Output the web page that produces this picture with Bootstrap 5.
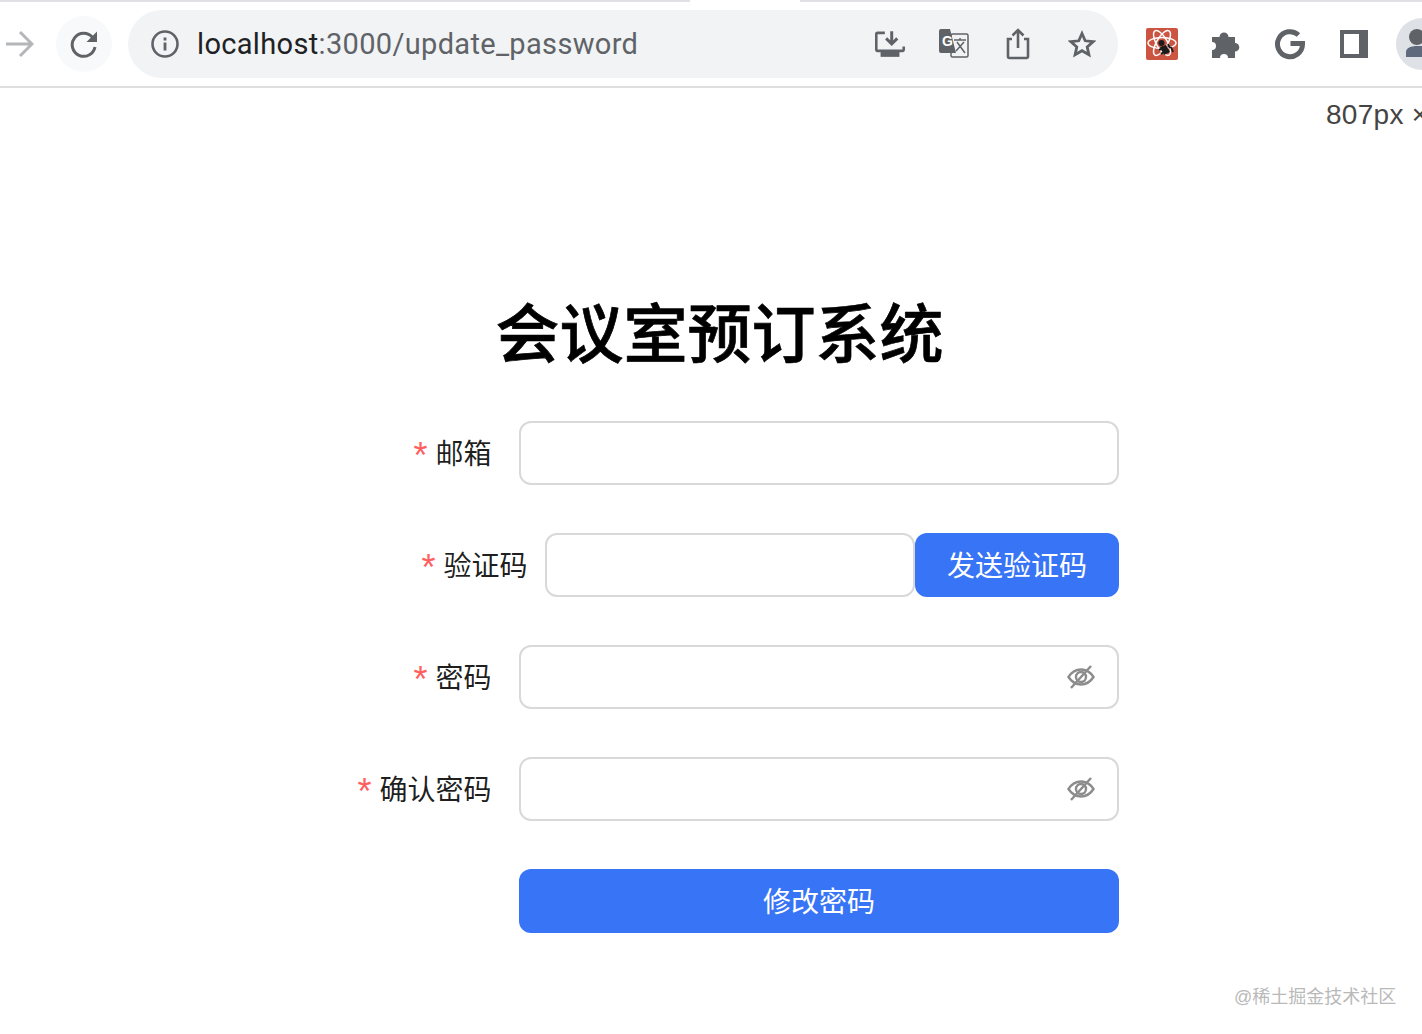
<!DOCTYPE html>
<html lang="zh-CN">
<head>
    <meta charset="UTF-8">
    <meta name="viewport" content="width=device-width, initial-scale=1.0">
    <title>会议室预订系统</title>
    <link href="https://cdn.jsdelivr.net/npm/bootstrap@5.3.3/dist/css/bootstrap.min.css" rel="stylesheet" />
    <style>
        html, body { height: 100%; }
        body {
            font-family: "Liberation Sans", "Noto Sans CJK SC", sans-serif;
            background: #fff;
            overflow: hidden;
            position: relative;
        }

        /* browser chrome */
        .tab-strip {
            height: 2px;
            background: linear-gradient(to right, #dfe1e5 690px, #fff 690px, #fff 800px, #dfe1e5 800px);
        }
        .tool-bar {
            width: 1460px;
            height: 86px;
            padding: 8px 0;
            border-bottom: 2px solid #dedfe1;
        }
        .tool-bar > * { flex-shrink: 0; }
        .back-arrow { width: 28px; margin-left: 6px; margin-right: 22px; }
        .reload-btn { width: 56px; height: 56px; border-radius: 50%; background: #f8f9fa; margin-right: 16px; }
        .omni-box { width: 990px; height: 68px; border-radius: 34px; background: #f1f3f4; padding-left: 22px; }
        .omni-url {
            font-family: Roboto, "Liberation Sans", sans-serif;
            font-size: 29px;
            color: #5f6368;
            margin-left: 17px;
            padding-top: 2px;
            letter-spacing: .33px;
        }
        .omni-url b { font-weight: 400; color: #202124; }
        .omni-icons { margin-left: auto; margin-right: 22px; gap: 31px; }
        .star-icon { margin-left: 1px; }
        .ext-icons { margin-left: 28px; gap: 32px; }
        .avatar-btn {
            width: 52px; height: 52px; border-radius: 50%; background: #dee1e6;
            flex-shrink: 0; margin-left: -6px; overflow: hidden;
        }
        .size-tip { position: absolute; left: 1326px; top: 96px; font-size: 28px; line-height: 38px; color: #444; white-space: nowrap; letter-spacing: .3px; }
        .water-mark { position: absolute; left: 1234px; top: 985px; font-size: 18px; line-height: 24px; color: #b9b9b9; white-space: nowrap; }

        /* form */
        .page-main { padding-left: 357px; width: 1119px; }
        .page-title {
            font-family: "Noto Sans CJK SC", sans-serif;
            font-size: 64px;
            line-height: 90px;
            font-weight: 500;
            -webkit-text-stroke: .7px #000;
            color: #000;
            text-align: center;
            margin: 196px 37px 47px 0;
        }
        .form-stack { gap: 48px; }
        .field-row { height: 64px; }
        .field-label {
            width: 134.5px;
            margin-right: 27.5px;
            padding-bottom: 2px;
            font-family: "Noto Sans CJK SC", sans-serif;
            font-size: 28px;
            color: rgba(0, 0, 0, .88);
            text-align: right;
            white-space: nowrap;
            flex-shrink: 0;
        }
        .field-label.wide { width: 170.5px; margin-right: 17.5px; }
        .req-star { color: #ff5f5f; margin-right: 8px; font-family: "Liberation Sans", sans-serif; font-size: 36px; line-height: 1; vertical-align: -4px; }
        .form-control.field-input {
            height: 64px;
            border: 2px solid #d9d9d9;
            border-radius: 12px;
            box-shadow: none;
        }
        .field-wrap { width: 600px; }
        .field-wrap.short { width: 370px; }
        .eye-off { position: absolute; right: 24px; top: 18px; }
        .btn.blue-btn {
            height: 64px;
            background: #3874f6;
            border: 0;
            border-radius: 12px;
            font-family: "Noto Sans CJK SC", sans-serif;
            font-size: 28px;
            color: #fff;
            padding: 0 0 2px;
        }
        .send-btn { width: 204px; flex-shrink: 0; }
        .submit-btn { width: 600px; margin-left: 162px; }
    </style>
</head>

<body>
    <div class="tab-strip"></div>
    <div class="tool-bar d-flex align-items-center">
        <svg class="back-arrow" width="28" height="28" viewBox="0 0 28 28" fill="none" stroke="#b4b6b8" stroke-width="3">
            <path d="M0 14H26M14 2L26 14L14 26" />
        </svg>
        <div class="reload-btn d-flex align-items-center justify-content-center">
            <svg width="28" height="28" viewBox="0 0 28 28">
                <path d="M22.6 7.5A11.5 11.5 0 1 0 25 17" fill="none" stroke="#5f6368" stroke-width="3" />
                <path d="M27 1.5V12H16.5Z" fill="#5f6368" />
            </svg>
        </div>
        <div class="omni-box d-flex align-items-center">
            <svg width="30" height="30" viewBox="0 0 30 30">
                <circle cx="15" cy="15" r="12.5" fill="none" stroke="#5f6368" stroke-width="2.6" />
                <rect x="13.6" y="13.5" width="2.8" height="8" fill="#5f6368" />
                <rect x="13.6" y="8.5" width="2.8" height="3" fill="#5f6368" />
            </svg>
            <span class="omni-url"><b>localhost</b>:3000/update_password</span>
            <div class="omni-icons d-flex align-items-center">
                <!-- install -->
                <svg width="36" height="28" viewBox="-3 0 42 32">
                    <path d="M12 3H3.5A1.5 1.5 0 0 0 2 4.500V22.500A1.500 1.500 0 0 0 3.500 24H32.500A1.500 1.500 0 0 0 34 22.500V19" fill="none" stroke="#5f6368" stroke-width="3" />
                    <path d="M20 1V15M13.500 9.500L20 16L26.500 9.500" fill="none" stroke="#5f6368" stroke-width="3.500" />
                    <rect x="7" y="25" width="22" height="6" fill="#5f6368" />
                </svg>
                <!-- translate -->
                <svg width="30" height="30" viewBox="0 0 30 30">
                    <rect x="12" y="5" width="17" height="23" rx="1.500" fill="#f1f3f4" stroke="#5f6368" stroke-width="1.500" />
                    <path d="M2 0H11L17 24H2A2 2 0 0 1 0 22V2A2 2 0 0 1 2 0Z" fill="#5f6368" />
                    <text x="3" y="17" font-family="Liberation Sans" font-size="14" font-weight="700" fill="#fff">G</text>
                    <path d="M15 11H27M21 9V11M17 22L25 13M18 13L26 24" fill="none" stroke="#5f6368" stroke-width="1.500" />
                </svg>
                <!-- share -->
                <svg width="36" height="32" viewBox="0 0 36 32">
                    <path d="M12 11H8V28.500A1.500 1.500 0 0 0 9.500 30H26.500A1.500 1.500 0 0 0 28 28.500V11H24" fill="none" stroke="#5f6368" stroke-width="2.600" />
                    <path d="M18 20V2M12.500 7.500L18 2L23.500 7.500" fill="none" stroke="#5f6368" stroke-width="2.600" />
                </svg>
                <!-- star -->
                <svg class="star-icon" width="28" height="28" viewBox="0 0 28 28">
                    <path d="M14 3.500L17.200 10.800L25.200 11.600L19.200 16.900L20.900 24.700L14 20.700L7.100 24.700L8.800 16.900L2.800 11.600L10.800 10.800Z" fill="none" stroke="#5f6368" stroke-width="2.800" />
                </svg>
            </div>
        </div>
        <div class="ext-icons d-flex align-items-center">
            <!-- react dev extension -->
            <svg width="32" height="32" viewBox="0 0 32 32">
                <rect width="32" height="32" rx="2" fill="#cb5540" />
                <g fill="none" stroke="#fff" stroke-width="1.500">
                    <ellipse cx="16" cy="15" rx="14" ry="5.500" />
                    <ellipse cx="16" cy="15" rx="14" ry="5.500" transform="rotate(60 16 15)" />
                    <ellipse cx="16" cy="15" rx="14" ry="5.500" transform="rotate(120 16 15)" />
                </g>
                <circle cx="15.500" cy="15" r="3" fill="#1b1b1b" />
                <path d="M14 19L20 17L24 24L18 27Z" fill="#1b1b1b" />
                <path d="M13 22L17 20M15 26L19 23M22 16L24 20M25 19L27 24" stroke="#1b1b1b" stroke-width="2" />
            </svg>
            <!-- puzzle -->
            <svg width="32" height="32" viewBox="0 0 32 32">
                <path d="M2 9H9.500A4.500 4.500 0 1 1 18.500 9H25V15A4.300 4.300 0 1 1 25 23.600V30H18A4 4 0 1 0 10 30H2V22A4 4 0 1 0 2 14Z" fill="#5f6368" />
            </svg>
            <!-- google -->
            <svg width="32" height="32" viewBox="0 0 32 32">
                <path d="M24.500 7A12.500 12.500 0 1 0 28.500 16.500V15.500H16.500" fill="none" stroke="#5f6368" stroke-width="5" />
            </svg>
            <!-- side panel -->
            <svg width="32" height="32" viewBox="0 0 32 32">
                <path d="M2 2H30V30H2ZM6 6V26H21V6Z" fill="#5f6368" fill-rule="evenodd" />
            </svg>
            <div class="avatar-btn">
                <svg width="52" height="52" viewBox="0 0 52 52">
                    <circle cx="21" cy="19" r="8" fill="#5f6368" />
                    <path d="M10 39V34C10 30 15 28 21 28H34V39Z" fill="#5f6b7c" />
                </svg>
            </div>
        </div>
    </div>

    <div class="size-tip">807px ×</div>

    <main class="page-main">
        <h1 class="page-title">会议室预订系统</h1>
        <form class="form-stack d-flex flex-column">
            <div class="field-row d-flex align-items-center">
                <label class="field-label"><span class="req-star">*</span>邮箱</label>
                <div class="field-wrap">
                    <input type="text" class="form-control field-input">
                </div>
            </div>
            <div class="field-row d-flex align-items-center">
                <label class="field-label wide"><span class="req-star">*</span>验证码</label>
                <div class="field-wrap short">
                    <input type="text" class="form-control field-input">
                </div>
                <button type="button" class="btn blue-btn send-btn">发送验证码</button>
            </div>
            <div class="field-row d-flex align-items-center">
                <label class="field-label"><span class="req-star">*</span>密码</label>
                <div class="field-wrap position-relative">
                    <input type="password" class="form-control field-input">
                    <svg class="eye-off" width="28" height="28" viewBox="0 0 28 28" fill="none" stroke="#8c8c8c" stroke-width="2.400">
                        <path d="M1.500 14C5 8.500 9 6.500 14 6.500S23 8.500 26.500 14C23 19.500 19 21.500 14 21.500S5 19.500 1.500 14Z" />
                        <circle cx="14" cy="14" r="5" />
                        <path d="M4 25L24 3" />
                    </svg>
                </div>
            </div>
            <div class="field-row d-flex align-items-center">
                <label class="field-label"><span class="req-star">*</span>确认密码</label>
                <div class="field-wrap position-relative">
                    <input type="password" class="form-control field-input">
                    <svg class="eye-off" width="28" height="28" viewBox="0 0 28 28" fill="none" stroke="#8c8c8c" stroke-width="2.400">
                        <path d="M1.500 14C5 8.500 9 6.500 14 6.500S23 8.500 26.500 14C23 19.500 19 21.500 14 21.500S5 19.500 1.500 14Z" />
                        <circle cx="14" cy="14" r="5" />
                        <path d="M4 25L24 3" />
                    </svg>
                </div>
            </div>
            <button type="button" class="btn blue-btn submit-btn">修改密码</button>
        </form>
    </main>

    <div class="water-mark">@稀土掘金技术社区</div>

    <script src="https://cdn.jsdelivr.net/npm/bootstrap@5.3.3/dist/js/bootstrap.bundle.min.js"></script>
</body>

</html>
